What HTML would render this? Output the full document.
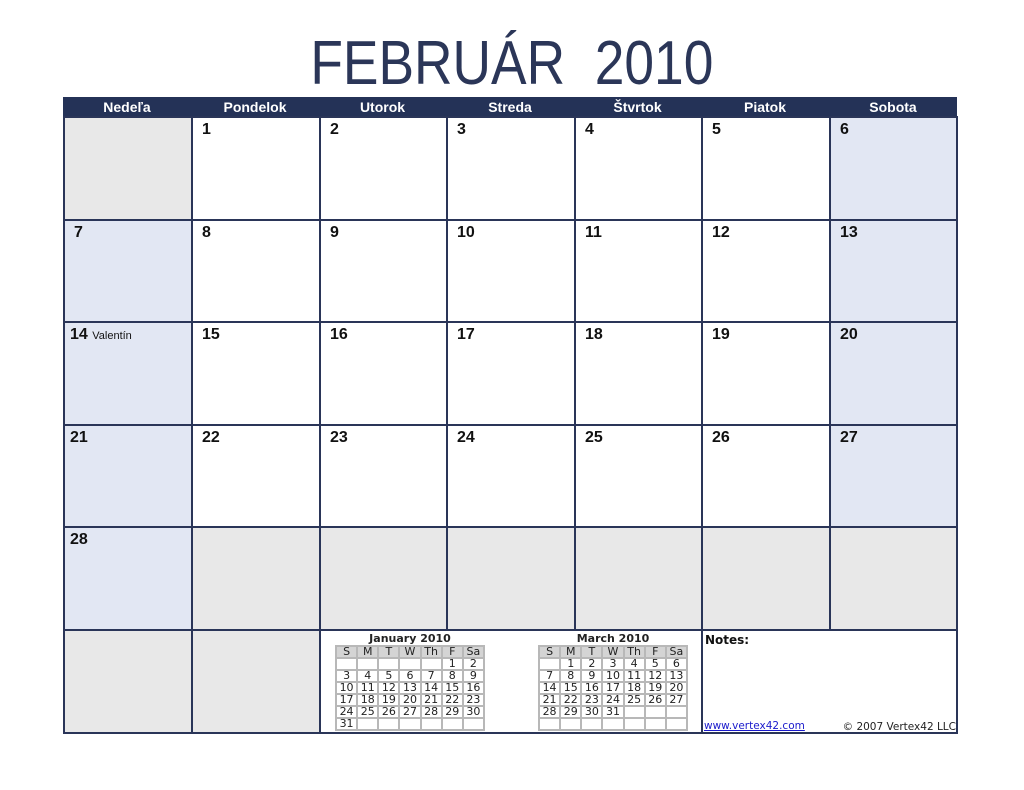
<!DOCTYPE html>
<html><head><meta charset="utf-8"><style>
body{margin:0;width:1024px;height:790px;background:#fff;position:relative;font-family:"Liberation Sans",sans-serif;overflow:hidden}
.title{position:absolute;left:0;width:1024px;top:29px;text-align:center;font-size:62px;line-height:70px;color:#2b3658;white-space:pre;transform:scaleX(0.86);transform-origin:511px 0}
.hd{position:absolute;top:97px;height:20px;background:#243257;color:#fff;font-size:14px;font-weight:bold;line-height:21px;text-align:center}
.c{position:absolute;box-sizing:border-box;border:2px solid #2a3558;font-size:16px;font-weight:bold;color:#111;padding:3px 0 0 9px}
.g{background:#e8e8e8}.b{background:#e2e7f3}
.mini{position:absolute;font-family:"DejaVu Sans",sans-serif;color:#222}
.mini .t{text-align:center;font-weight:bold;font-size:11px;height:13px;line-height:13px}
.mini table{border-collapse:collapse;table-layout:fixed;width:150px}
.mini td{border:2px solid #b8b8b8;height:10px;line-height:10px;text-align:center;padding:0;font-size:11px}
.mini tr.h td{background:#d4d4d4}
</style></head><body>
<div class="title">FEBRUÁR  2010</div>
<div class="hd" style="left:63px;width:894px;"></div>
<div class="hd" style="left:63px;width:128px">Nedeľa</div>
<div class="hd" style="left:191px;width:128px">Pondelok</div>
<div class="hd" style="left:319px;width:127px">Utorok</div>
<div class="hd" style="left:446px;width:128px">Streda</div>
<div class="hd" style="left:574px;width:127px">Štvrtok</div>
<div class="hd" style="left:701px;width:128px">Piatok</div>
<div class="hd" style="left:829px;width:128px">Sobota</div>

<div class="c g" style="left:63px;top:116px;width:130px;height:105px"></div>
<div class="c" style="left:191px;top:116px;width:130px;height:105px">1</div>
<div class="c" style="left:319px;top:116px;width:129px;height:105px">2</div>
<div class="c" style="left:446px;top:116px;width:130px;height:105px">3</div>
<div class="c" style="left:574px;top:116px;width:129px;height:105px">4</div>
<div class="c" style="left:701px;top:116px;width:130px;height:105px">5</div>
<div class="c b" style="left:829px;top:116px;width:129px;height:105px">6</div>

<div class="c b" style="left:63px;top:219px;width:130px;height:104px">7</div>
<div class="c" style="left:191px;top:219px;width:130px;height:104px">8</div>
<div class="c" style="left:319px;top:219px;width:129px;height:104px">9</div>
<div class="c" style="left:446px;top:219px;width:130px;height:104px">10</div>
<div class="c" style="left:574px;top:219px;width:129px;height:104px">11</div>
<div class="c" style="left:701px;top:219px;width:130px;height:104px">12</div>
<div class="c b" style="left:829px;top:219px;width:129px;height:104px">13</div>

<div class="c b" style="left:63px;top:321px;width:130px;height:105px;padding-left:5px">14 <span style="font-size:11px;font-weight:normal">Valentín</span></div>
<div class="c" style="left:191px;top:321px;width:130px;height:105px">15</div>
<div class="c" style="left:319px;top:321px;width:129px;height:105px">16</div>
<div class="c" style="left:446px;top:321px;width:130px;height:105px">17</div>
<div class="c" style="left:574px;top:321px;width:129px;height:105px">18</div>
<div class="c" style="left:701px;top:321px;width:130px;height:105px">19</div>
<div class="c b" style="left:829px;top:321px;width:129px;height:105px">20</div>

<div class="c b" style="left:63px;top:424px;width:130px;height:104px;padding-left:5px">21</div>
<div class="c" style="left:191px;top:424px;width:130px;height:104px">22</div>
<div class="c" style="left:319px;top:424px;width:129px;height:104px">23</div>
<div class="c" style="left:446px;top:424px;width:130px;height:104px">24</div>
<div class="c" style="left:574px;top:424px;width:129px;height:104px">25</div>
<div class="c" style="left:701px;top:424px;width:130px;height:104px">26</div>
<div class="c b" style="left:829px;top:424px;width:129px;height:104px">27</div>

<div class="c b" style="left:63px;top:526px;width:130px;height:105px;padding-left:5px">28</div>
<div class="c g" style="left:191px;top:526px;width:130px;height:105px"></div>
<div class="c g" style="left:319px;top:526px;width:129px;height:105px"></div>
<div class="c g" style="left:446px;top:526px;width:130px;height:105px"></div>
<div class="c g" style="left:574px;top:526px;width:129px;height:105px"></div>
<div class="c g" style="left:701px;top:526px;width:130px;height:105px"></div>
<div class="c g" style="left:829px;top:526px;width:129px;height:105px"></div>

<div class="c g" style="left:63px;top:629px;width:130px;height:105px"></div>
<div class="c g" style="left:191px;top:629px;width:130px;height:105px"></div>
<div class="c" style="left:319px;top:629px;width:384px;height:105px"></div>
<div class="c" style="left:701px;top:629px;width:257px;height:105px;padding:0">
<div style="position:absolute;left:2px;top:2px;font-family:'DejaVu Sans',sans-serif;font-weight:bold;font-size:12px">Notes:</div>
<div style="position:absolute;left:1px;bottom:0px;font-family:'DejaVu Sans',sans-serif;font-weight:normal;font-size:10.5px;color:#1a1acc;text-decoration:underline">www.vertex42.com</div>
<div style="position:absolute;right:0;bottom:-1px;font-family:'DejaVu Sans',sans-serif;font-weight:normal;font-size:10.5px;color:#222">© 2007 Vertex42 LLC</div>
</div>

<div class="mini" style="left:335px;top:632px">
<div class="t">January 2010</div>
<table>
<tr class="h"><td>S</td><td>M</td><td>T</td><td>W</td><td>Th</td><td>F</td><td>Sa</td></tr>
<tr><td></td><td></td><td></td><td></td><td></td><td>1</td><td>2</td></tr>
<tr><td>3</td><td>4</td><td>5</td><td>6</td><td>7</td><td>8</td><td>9</td></tr>
<tr><td>10</td><td>11</td><td>12</td><td>13</td><td>14</td><td>15</td><td>16</td></tr>
<tr><td>17</td><td>18</td><td>19</td><td>20</td><td>21</td><td>22</td><td>23</td></tr>
<tr><td>24</td><td>25</td><td>26</td><td>27</td><td>28</td><td>29</td><td>30</td></tr>
<tr><td>31</td><td></td><td></td><td></td><td></td><td></td><td></td></tr>
</table></div>
<div class="mini" style="left:538px;top:632px">
<div class="t">March 2010</div>
<table>
<tr class="h"><td>S</td><td>M</td><td>T</td><td>W</td><td>Th</td><td>F</td><td>Sa</td></tr>
<tr><td></td><td>1</td><td>2</td><td>3</td><td>4</td><td>5</td><td>6</td></tr>
<tr><td>7</td><td>8</td><td>9</td><td>10</td><td>11</td><td>12</td><td>13</td></tr>
<tr><td>14</td><td>15</td><td>16</td><td>17</td><td>18</td><td>19</td><td>20</td></tr>
<tr><td>21</td><td>22</td><td>23</td><td>24</td><td>25</td><td>26</td><td>27</td></tr>
<tr><td>28</td><td>29</td><td>30</td><td>31</td><td></td><td></td><td></td></tr>
<tr><td></td><td></td><td></td><td></td><td></td><td></td><td></td></tr>
</table></div>
</body></html>
